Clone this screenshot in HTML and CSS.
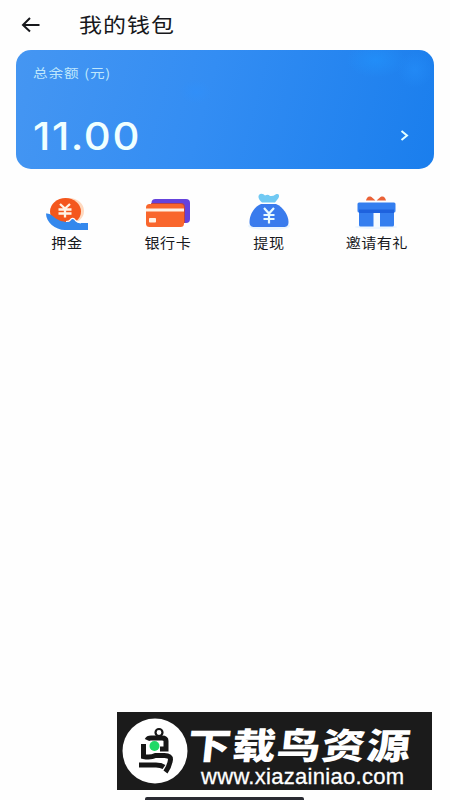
FILE: index.html
```html
<!DOCTYPE html>
<html lang="zh-CN">
<head>
<meta charset="utf-8">
<title>我的钱包</title>
<link rel="stylesheet" href="styles.css">
</head>
<body>
<div class="screen">
  <header class="header">
    <svg class="back" width="20" height="18" viewBox="0 0 20 18"><path d="M9 2 2 9l7 6.500M2 9h16.500"/></svg>
    <h1 class="title">我的钱包</h1>
  </header>
  <section class="card">
    <div class="card-label">总余额<span class="unit">(元)</span></div>
    <div class="card-row">
      <div class="amount">11.00</div>
      <svg class="chevron" width="10" height="12" viewBox="0 0 10 12"><path d="M1.500 1 7 5.500l-5.500 4.500"/></svg>
    </div>
  </section>
  <nav class="actions">
    <div class="action">
      <svg width="44" height="38" viewBox="0 0 44 38">
        <ellipse cx="24" cy="18" rx="15" ry="13" fill="#ffd9bf"/>
        <ellipse cx="20.500" cy="18.500" rx="15.500" ry="13.500" fill="#f4571d"/>
        <path d="M15 11l5 4.500 5-4.500M20 15.500v9M13.500 16.500h13M13.500 20.500h13" fill="none" stroke="#fff5e6" stroke-width="2.300"/>
        <path d="M1 20.500q3-.5 6 2c5 4.500 10 6.500 16 6.500 3 0 2-2 3-3 2-1.500 3.500 0 4.500 1.500 1.500 2 4 2.500 6.500 2.500h6v7H20C10 37 1 29 1 20.500Z" fill="#3488ed"/>
        <path d="M21 28.500c4 0 4-1 5-2.500 2-1.500 3.500 0 4.500 1.500 1.500 1.700 3.500 2.200 5.500 2.400" fill="none" stroke="#fff" stroke-width="1.200"/>
      </svg>
      <span>押金</span>
    </div>
    <div class="action">
      <svg width="44" height="38" viewBox="0 0 44 38">
        <rect x="5.500" y="6" width="38.500" height="24" rx="4" fill="#6543dc"/>
        <path d="M5 10h30q4 0 4 4v16H12Z" fill="#b5424e"/>
        <rect x="0" y="11" width="38" height="23" rx="3.500" fill="#f9662c"/>
        <path d="M0 15.500h38v3H0z" fill="#fff1e4"/>
        <rect x="3" y="25" width="7" height="4.500" rx=".8" fill="#fff1e4"/>
      </svg>
      <span>银行卡</span>
    </div>
    <div class="action">
      <svg width="44" height="38" viewBox="0 0 44 38">
        <ellipse cx="22" cy="33" rx="21" ry="4" fill="#eaf5ff"/>
        <path d="M15 9.500C11 6 10.500 2.500 13 1q3-1 5 1.500 3-1.500 5 .5 3 .5 5.500-1.500c3-1.500 4.500.5 3 3.500L28 9.500Z" fill="#70c9f3"/>
        <path d="M14 11h15c7 3 12.500 11 12.500 18 0 4-2 5-5 5h-29c-3 0-5-1-5-5C2.500 22 7 14 14 11Z" fill="#397bed"/>
        <path d="M17 15l5 5.500 5-5.500M22 20.500v10M16.500 22h11M16.500 26h11" fill="none" stroke="#e7faff" stroke-width="2.200"/>
      </svg>
      <span>提现</span>
    </div>
    <div class="action">
      <svg width="44" height="38" viewBox="0 0 44 38">
        <ellipse cx="21" cy="34" rx="21" ry="2" fill="#edf6ff"/>
        <path d="m20.500 7.500-4-3.500c-3-1.500-5 .5-5.500 3.500Zm1 0 4-3.500c3-1.500 5 .5 5.500 3.500Z" fill="#ea6237"/>
        <rect x="2.500" y="9.500" width="38" height="10" rx="1.500" fill="#347eef"/>
        <path d="M4 19h35v13q0 1.500-1.500 1.500h-32Q4 33.500 4 32Z" fill="#347eef"/>
        <path d="M4 16.500h35V20H4z" fill="#1e62de"/>
        <path d="M18.500 20H25v14h-6.500z" fill="#f5fbff"/>
      </svg>
      <span>邀请有礼</span>
    </div>
  </nav>
  <footer class="footer">
    <div class="brand">
      <svg class="logo" width="66" height="66" viewBox="0 0 66 66">
        <circle cx="33" cy="33" r="32.500" fill="#fff"/>
        <g fill="none" stroke="#161616" stroke-width="5">
          <circle cx="37" cy="14.500" r="3.500" stroke-width="2.200"/>
          <path d="M25 22q1-2 4-2h11q4 0 4 3v8h-6M21.500 26v12.500q7 1.500 12-1h9q6 0 6 4-1 7-5 12.500M17 47h17q5 0 8 2"/>
        </g>
        <circle cx="32.500" cy="28" r="5" fill="#20d967"/>
      </svg>
      <div class="brand-text">
        <div class="brand-name">下载鸟资源</div>
        <div class="brand-url">www.xiazainiao.com</div>
      </div>
    </div>
    <div class="home-bar"></div>
  </footer>
</div>
</body>
</html>
```
FILE: styles.css
```css
* { box-sizing: border-box; }
body {
  margin: 0;
  background: #fefefe;
  color: #17181c;
  font-family: "Noto Sans CJK SC", sans-serif;
}
.screen { height: 800px; display: flex; flex-direction: column; overflow: hidden; }
.header { height: 50px; flex: none; display: flex; align-items: center; padding-left: 21px; }
.back { fill: none; stroke: #17181c; stroke-width: 2; }
.title { margin: -3px 0 0 38px; font-size: 20.500px; font-weight: 400; line-height: 30px; letter-spacing: .9px; transform: scaleX(1.12); transform-origin: left; }
.card {
  height: 119px;
  flex: none;
  margin: 0 16px;
  padding: 12px 24px 0 17px;
  border-radius: 15px;
  color: #f0ffff;
  background:
    radial-gradient(ellipse 30px 18px at 360px 10px, #2196ff88, transparent),
    radial-gradient(ellipse 18px 18px at 399px 20px, #2590fb88, transparent),
    radial-gradient(ellipse 16px 12px at 180px 42px, #318ff8, transparent),
    linear-gradient(105deg, #4596f2, #338df3 45%, #1a7eed);
}
.card-label { width: max-content; height: 21px; font-size: 12.500px; line-height: 21px; letter-spacing: .8px; color: #bfe7fc; transform: scaleX(1.17); transform-origin: left; }
.unit { margin-left: 4px; letter-spacing: .6px; }
.card-row { display: flex; align-items: center; justify-content: space-between; margin-top: 30px; height: 46px; }
.amount { font: 500 38px/46px Inter, sans-serif; letter-spacing: 1.400px; transform: scaleX(1.1); transform-origin: left; }
.chevron { fill: none; stroke: #e2ffff; stroke-width: 2; }
.actions { display: grid; grid-template-columns: 101px 102px 99px 117px; padding: 24px 0 0 16px; }
.action { display: flex; flex-direction: column; align-items: center; font-size: 13.500px; line-height: 20px; letter-spacing: .4px; }
.action span { margin-top: 1px; margin-right: -.4px; transform: scaleX(1.12); }
.footer { margin-top: auto; }
.brand { width: 315px; height: 78px; margin-left: 117px; padding-left: 5px; display: flex; align-items: center; background: #1b1b1b; color: #fff; }
.brand-text { padding-top: 11px; }
.brand-name { width: max-content; font-size: 36px; font-weight: 900; line-height: 36px; letter-spacing: 1px; white-space: nowrap; transform: scaleX(1.21) skewX(-5deg); transform-origin: left; }
.brand-url { width: max-content; margin: 3px 0 0 13px; font: 22px/25px "Liberation Sans", sans-serif; letter-spacing: .3px; -webkit-text-stroke: .3px #fff; }
.home-bar { width: 159px; height: 3px; margin: 7px 0 0 145px; border-radius: 2px 2px 0 0; background: #292a32; }
```
